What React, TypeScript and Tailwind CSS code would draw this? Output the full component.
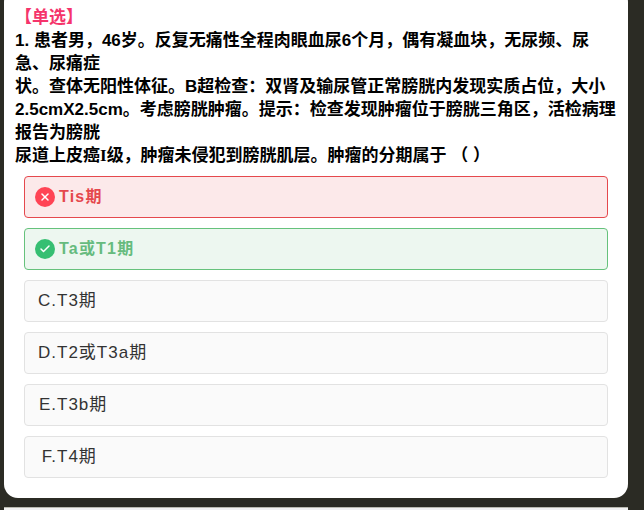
import { Check, X } from 'lucide-react';

const others = [
    { key: 'C.', text: 'T3期' },
    { key: 'D.', text: 'T2或T3a期' },
    { key: 'E.', text: 'T3b期' },
    { key: 'F.', text: 'T4期' },
];

export default function App() {
    return (
        <div className="h-[510px] w-[644px] overflow-hidden bg-[#2b2b24] font-['Liberation_Sans','Noto_Sans_CJK_SC',sans-serif]">
            <div className="-mt-[12px] ml-1 h-[510px] w-[624px] rounded-[14px] bg-white pl-[11px] pr-[10px] pt-[18px]">
                <div className="text-[17px] font-bold leading-[23px] text-[#f5346b]">【单选】</div>
                <div className="text-[17px] font-bold leading-[23px] text-black">
                    1. 患者男，46岁。反复无痛性全程肉眼血尿6个月，偶有凝血块，无尿频、尿<br />
                    急、尿痛症<br />
                    状。查体无阳性体征。B超检查：双肾及输尿管正常膀胱内发现实质占位，大小<br />
                    2.5cmX2.5cm。考虑膀胱肿瘤。提示：检查发现肿瘤位于膀胱三角区，活检病理<br />
                    报告为膀胱<br />
                    尿道上皮癌<span className="font-['Liberation_Serif',serif]">I</span>级，肿瘤未侵犯到膀胱肌层。肿瘤的分期属于 （ ）
                </div>
                <div className="ml-[9px] mt-[9px] flex w-[584px] flex-col gap-[10px]">
                    <div className="flex h-[42px] items-center rounded-[4px] border border-[#e5484d] bg-[#fce9ea] pl-[10px] text-[16px] font-bold tracking-[1.2px] text-[#e5484d]">
                        <span className="mr-[4px] flex h-5 w-5 items-center justify-center rounded-full bg-[#ff4455]">
                            <X className="h-3 w-3 text-white" strokeWidth={3} />
                        </span>
                        Tis期
                    </div>
                    <div className="flex h-[42px] items-center rounded-[4px] border border-[#66c27c] bg-[#edf7f0] pl-[10px] text-[16px] font-bold tracking-[1.2px] text-[#66bb7e]">
                        <span className="mr-[4px] flex h-5 w-5 items-center justify-center rounded-full bg-[#36bf72]">
                            <Check className="h-3 w-3 text-white" strokeWidth={3} />
                        </span>
                        Ta或T1期
                    </div>
                    {others.map((o) => (
                        <div key={o.key} className="flex h-[42px] items-center rounded-[4px] border border-[#e2e2e2] bg-[#fafafa] pl-[13px] text-[17px] tracking-[1px] text-[#333]">
                            <span className="w-[19px] text-right">{o.key}</span>
                            {o.text}
                        </div>
                    ))}
                </div>
            </div>
            <div className="ml-1 mt-[9px] h-px w-[624px] bg-[#b9b9b0]" />
            <div className="ml-1 h-[2px] w-[624px] bg-[#f2f2f2]" />
        </div>
    );
}
